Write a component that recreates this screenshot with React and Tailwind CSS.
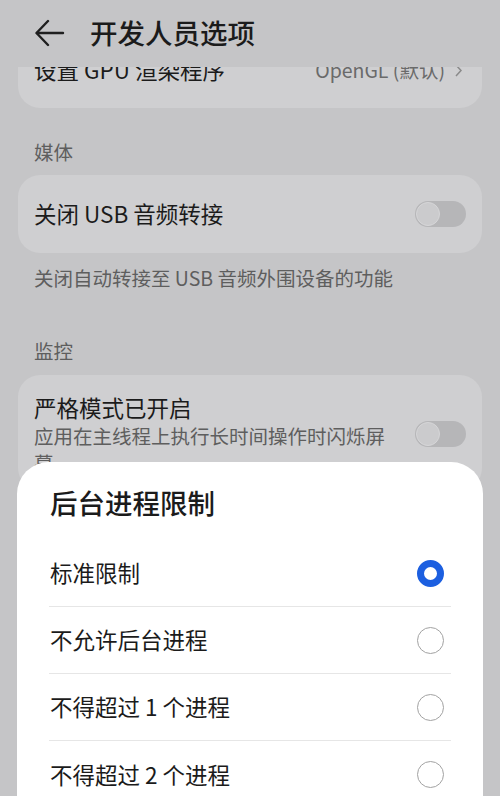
const font = { fontFamily: '"Noto Sans CJK SC", "Noto Sans", sans-serif' };

const Toggle = () => (
	<div className="w-[51px] h-[26px] rounded-full bg-[#b6b6b8] flex items-center px-[1px] shrink-0">
		<div className="w-[24px] h-[24px] rounded-full bg-[#cbcbcd] border border-[#d6d6d8]" />
	</div>
);

const Radio = ({ checked }) =>
	checked ? (
		<div className="w-[27px] h-[27px] rounded-full border-[7px] border-[#1c5fe0] bg-white mr-[7px]" />
	) : (
		<div className="w-[27px] h-[27px] rounded-full border-[1.5px] border-[#a2a2a2] bg-white mr-[7px]" />
	);

const options = ["标准限制", "不允许后台进程", "不得超过 1 个进程", "不得超过 2 个进程"];

const App = () => {
	return (
		<div
			className="relative w-[500px] h-[796px] overflow-hidden bg-[#c5c5c7] text-[#1b1b1b]"
			style={font}
		>
			{/* header */}
			<div className="relative z-10 h-[67px] bg-[#c5c5c7] flex items-center pl-[35px] pb-[1px]">
				<svg width="30" height="28" viewBox="0 0 30 28" fill="none" stroke="#1f1f1f" strokeWidth="2.4" strokeLinecap="round" strokeLinejoin="round">
					<path d="M28 14H2" />
					<path d="M13 2L1.5 14L13 26" />
				</svg>
				<div className="ml-[25px] text-[27.5px] font-medium leading-none">开发人员选项</div>
			</div>

			{/* list */}
			<div className="-mt-[35px] px-[18px]">
				<div className="h-[76px] rounded-[22px] bg-[#cfcfd1] flex items-center justify-between pl-4 pr-[20px]">
					<span className="text-[22.5px]">设置 GPU 渲染程序</span>
					<div className="flex items-center gap-[10px] text-[19.5px] text-[#6a6a6a]">
						<span>OpenGL (默认)</span>
						<svg width="7" height="13" viewBox="0 0 7 13" fill="none" stroke="#8a8a8a" strokeWidth="1.5">
							<path d="M1 1l5 5.5L1 12" />
						</svg>
					</div>
				</div>

				<div className="mt-[31px] mb-[10px] pl-4 text-[19.5px] leading-[26px] text-[#5e5e5e]">媒体</div>

				<div className="h-[78px] rounded-[22px] bg-[#cfcfd1] flex items-center justify-between pl-4 pr-[16px]">
					<span className="text-[22.5px]">关闭 USB 音频转接</span>
					<Toggle />
				</div>

				<div className="mt-[12px] pl-4 text-[19.5px] leading-[26px] text-[#5e5e5e]">
					关闭自动转接至 USB 音频外围设备的功能
				</div>

				<div className="mt-[47px] mb-[11px] pl-4 text-[19.5px] leading-[26px] text-[#5e5e5e]">监控</div>

				<div className="rounded-[22px] bg-[#cfcfd1] flex items-center justify-between pl-4 pr-[16px] pt-[17px] pb-[14px]">
					<div className="w-[360px]">
						<div className="text-[22.5px] leading-[30px]">严格模式已开启</div>
						<div className="text-[19.5px] leading-[27px] text-[#5e5e5e]">
							应用在主线程上执行长时间操作时闪烁屏幕
						</div>
					</div>
					<Toggle />
				</div>
			</div>

			{/* bottom sheet */}
			<div className="absolute left-[17px] right-[17px] top-[462px] bottom-0 bg-white rounded-t-[32px] pt-[23px]">
				<div className="pl-[33px] text-[27.5px] font-medium leading-[34px]">后台进程限制</div>
				<div className="mt-[21px] mx-[32px]">
					{options.map((opt, i) => (
						<div
							key={opt}
							className={`h-[67px] flex items-center justify-between ${
								i < options.length - 1 ? "border-b border-[#e6e6e6]" : ""
							}`}
						>
							<span className="pl-[1px] text-[22.5px]">{opt}</span>
							<Radio checked={i === 0} />
						</div>
					))}
				</div>
			</div>
		</div>
	);
};

export default App;
